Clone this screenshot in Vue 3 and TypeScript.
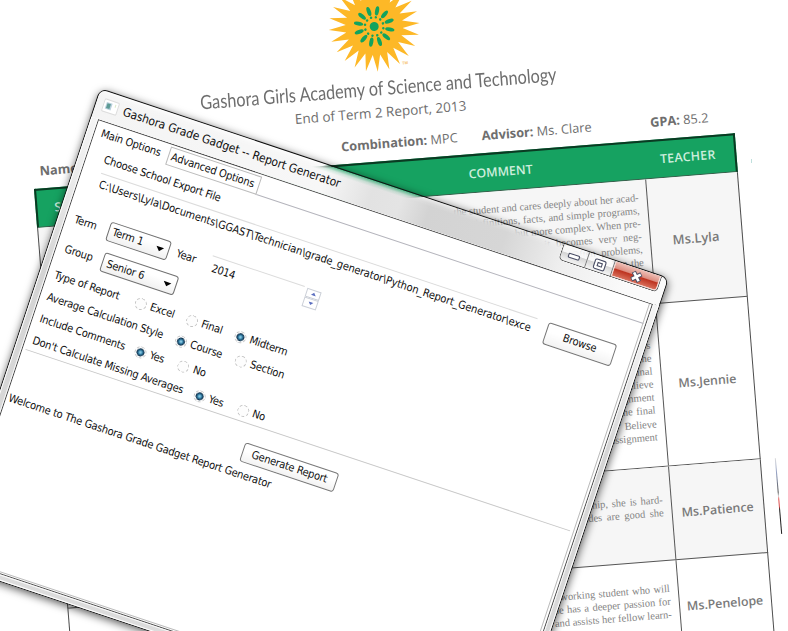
<script setup lang="ts">
interface Choice {
  label: string
  on?: boolean
  width: number
}
interface OptionRow {
  label: string
  width: number
  choices: Choice[]
}
interface ReportLine {
  text: string
  spread?: number
}
interface ReportRow {
  teacher: string
  size: string
  lines: ReportLine[]
}

const optionRows: OptionRow[] = [
  {
    label: 'Type of Report',
    width: 85,
    choices: [
      { label: 'Excel', width: 54 },
      { label: 'Final', width: 50.7 },
      { label: 'Midterm', on: true, width: 60 },
    ],
  },
  {
    label: 'Average Calculation Style',
    width: 134.8,
    choices: [
      { label: 'Course', on: true, width: 63.3 },
      { label: 'Section', width: 60 },
    ],
  },
  {
    label: 'Include Comments',
    width: 99.6,
    choices: [
      { label: 'Yes', on: true, width: 45.9 },
      { label: 'No', width: 40 },
    ],
  },
  {
    label: "Don't Calculate Missing Averages",
    width: 169.6,
    choices: [
      { label: 'Yes', on: true, width: 46 },
      { label: 'No', width: 40 },
    ],
  },
]

const reportRows: ReportRow[] = [
  {
    teacher: 'Ms.Lyla',
    size: 'r1',
    lines: [
      { text: 'the student and cares deeply about her acad-' },
      { text: 'definitions, facts, and simple programs,', spread: 0.4 },
      { text: 'but more complex. When pre-' },
      { text: 'it becomes very neg-', spread: 3.3 },
      { text: 'Often problems,', spread: 3 },
      { text: 'when the', spread: 1 },
      { text: 'is' },
    ],
  },
  {
    teacher: 'Ms.Jennie',
    size: 'r2',
    lines: [
      { text: 'ys' },
      { text: 'the' },
      { text: 'final' },
      { text: 'believe' },
      { text: 'assignment' },
      { text: 'the final', spread: 1 },
      { text: '’ Believe', spread: 1 },
      { text: 'assignment' },
    ],
  },
  {
    teacher: 'Ms.Patience',
    size: 'r3',
    lines: [
      { text: 'ship, she is hard-', spread: 1.3 },
      { text: 'grades are good she', spread: 2 },
    ],
  },
  {
    teacher: 'Ms.Penelope',
    size: 'r4',
    lines: [
      { text: 'working student who will', spread: 0.7 },
      { text: 'she has a deeper passion for', spread: 0.8 },
      { text: 'and assists her fellow learn-' },
    ],
  },
]

const sunPoints = Array.from({ length: 48 }, (_, i) => {
  const r = i % 2 === 0 ? 45.5 : 28.5
  const a = (i * Math.PI) / 24
  return `${(r * Math.cos(a)).toFixed(2)},${(r * Math.sin(a)).toFixed(2)}`
}).join(' ')
const petals = Array.from({ length: 12 }, (_, i) => i * 30 + 15)
</script>

<template>
  <div class="desk">
    <section class="page">
      <div class="crest">
        <svg width="100" height="94" viewBox="-50 -47 100 94">
          <polygon :points="sunPoints" fill="#fdb827" />
          <circle r="4.5" fill="#12a35e" />
          <g v-for="a in petals" :key="a" :transform="`rotate(${a})`" fill="#12a35e">
            <ellipse cx="15.9" cy="0" rx="4.7" ry="2" />
            <circle cx="9.3" cy="0" r="1.25" />
          </g>
          <text x="25" y="40" class="tm">TM</text>
        </svg>
      </div>
      <h1><span>Gashora Girls Academy of Science and Technology</span></h1>
      <h2>End of Term 2 Report, 2013</h2>
      <div class="facts">
        <span class="name"><b>Name</b></span>
        <span class="comb"><b>Combination:</b> MPC</span>
        <span class="adv"><b>Advisor:</b> Ms. Clare</span>
        <span><b>GPA:</b> 85.2</span>
      </div>
      <div class="table">
        <div class="thead">
          <span class="th-s">S</span>
          <span class="th-c">COMMENT</span>
          <span class="th-t">TEACHER</span>
        </div>
        <div v-for="row in reportRows" :key="row.teacher" class="trow" :class="row.size">
          <div class="cell"></div>
          <div class="cell comment">
            <p v-for="(line, i) in row.lines" :key="i" :style="{ wordSpacing: (line.spread ?? 0) + 'px' }">{{ line.text }}</p>
          </div>
          <div class="cell teacher">{{ row.teacher }}</div>
        </div>
      </div>
    </section>

    <i class="speck"></i>
    <i class="sliver"></i>

    <section class="window">
      <header class="titlebar">
        <svg class="app-icon" width="17" height="16" viewBox="0 0 17 16">
          <rect x=".5" y="1.500" width="15" height="12.500" rx="1" fill="#fff" stroke="#dcdcdc" />
          <rect x="3" y="4" width="6" height="7" fill="#b9d0dc" />
          <rect x="4" y="5" width="3.500" height="5" fill="#5d9a94" />
          <path d="M12.500 4v3" stroke="#dbe9c8" />
        </svg>
        <span class="title">Gashora Grade Gadget -- Report Generator</span>
        <div class="controls">
          <span class="ctl min">
            <svg width="14" height="10" viewBox="0 0 14 10"><rect x="1.500" y="3.200" width="11" height="4" rx="1" fill="#fff" stroke="#4b4f66" stroke-width="1.100" /></svg>
          </span>
          <span class="ctl max">
            <svg width="14" height="12" viewBox="0 0 14 12"><rect x="1.500" y="1" width="11" height="9.600" rx="1.500" fill="#fff" stroke="#4b4f66" stroke-width="1.100" /><rect x="4.800" y="4" width="4.400" height="3.400" fill="#fff" stroke="#4b4f66" stroke-width="1.100" /></svg>
          </span>
          <span class="ctl close">
            <svg width="15" height="13" viewBox="0 0 15 13"><path d="M3.500 2.500 11.500 10.500M11.500 2.500 3.500 10.500" stroke="#4b4f66" stroke-width="4.600" /><path d="M4 3 11 10M11 3 4 10" stroke="#fff" stroke-width="2.600" /></svg>
          </span>
        </div>
      </header>

      <div class="frame">
        <main class="client">
          <nav class="tabs">
            <span class="tab main">Main Options</span>
            <span class="tab adv-tab">Advanced Options</span>
            <span class="tab-rest"></span>
          </nav>
          <div class="pane">
            <div class="choose">Choose School Export File</div>
            <div class="file-row">
              <div class="entry"><span>C:\Users\Lyla\Documents\GGAST\Technician\grade_generator\Python_Report_Generator\exce</span></div>
              <button class="browse">Browse</button>
            </div>
            <div class="line term-line">
              <span class="lbl-term">Term</span>
              <span class="combo c-term">Term 1<svg width="9" height="6" viewBox="0 0 9 6"><path d="M.5.800h8L4.500 5.200z" fill="#000" /></svg></span>
              <span class="lbl-year">Year</span>
              <span class="year">2014</span>
              <span class="spin">
                <i><svg width="6" height="4" viewBox="0 0 6 4"><path d="M.5 3.500h5L3 .5z" fill="#5c6fc0" /></svg></i>
                <i><svg width="6" height="4" viewBox="0 0 6 4"><path d="M.5.500h5L3 3.500z" fill="#5c6fc0" /></svg></i>
              </span>
            </div>
            <div class="line group-line">
              <span class="lbl-group">Group</span>
              <span class="combo c-group">Senior 6<svg width="9" height="6" viewBox="0 0 9 6"><path d="M.5.800h8L4.500 5.200z" fill="#000" /></svg></span>
            </div>
            <div v-for="row in optionRows" :key="row.label" class="opt-row">
              <span :style="{ width: row.width + 'px' }">{{ row.label }}</span>
              <span v-for="c in row.choices" :key="c.label" class="choice" :style="{ width: c.width + 'px' }">
                <i class="radio" :class="{ on: c.on }"></i>{{ c.label }}
              </span>
            </div>
          </div>
          <div class="generate-row"><button class="generate">Generate Report</button></div>
          <div class="welcome">Welcome to The Gashora Grade Gadget Report Generator</div>
        </main>
      </div>
    </section>
  </div>
</template>

<style>
body {
  background: #fff;
  overflow: hidden;
}
</style>

<style scoped>
.desk {
  position: relative;
  width: 788px;
  height: 631px;
  overflow: hidden;
  background: #fff;
}
.desk * {
  box-sizing: border-box;
}

/* printed report */
.page {
  position: absolute;
  left: 34.3px;
  top: 7px;
  width: 703px;
  transform-origin: 0 182px;
  transform: rotate(-4.55deg);
  font-family: 'Open Sans', 'Liberation Sans', sans-serif;
  color: #6e6e6e;
  white-space: nowrap;
}
.crest {
  display: flex;
  justify-content: center;
  height: 94px;
}
.crest svg {
  display: block;
}
.tm {
  font: bold 4px 'Liberation Sans', sans-serif;
  fill: #f6c069;
}
h1 {
  display: flex;
  justify-content: center;
  margin: 2px 0 0;
  height: 26px;
  font: 400 19.500px/25px Lato, sans-serif;
}
h1 span {
  transform: scaleX(0.834);
}
h2 {
  margin: 0;
  height: 25px;
  text-align: center;
  font-size: 13.500px;
  font-weight: 400;
  line-height: 23px;
}
.facts {
  display: flex;
  height: 35px;
  padding: 7px 0 0 7px;
  font-size: 12.800px;
  line-height: 20px;
}
.facts b {
  font-weight: 700;
}
.name {
  width: 302.500px;
}
.comb {
  width: 141px;
}
.adv {
  width: 169px;
}
.table {
  width: 702.500px;
}
.thead {
  display: flex;
  height: 39px;
  background: #16a261;
  border: 2px solid #0a3a22;
  border-bottom: 1px solid #3e5e4e;
  color: #cdeedd;
  font-size: 12.400px;
  font-weight: 600;
  line-height: 36px;
}
.th-s {
  width: 88px;
  padding-left: 17px;
}
.th-c {
  width: 520px;
  padding-left: 344.500px;
}
.th-t {
  flex: 1;
  text-align: center;
  padding-right: 2px;
  letter-spacing: 0.200px;
}
.trow {
  display: grid;
  grid-template-columns: 90px 518.500px 1fr;
  border: 1.500px solid #4c4c4c;
  border-top: 0;
  border-bottom: 1.600px solid #555;
}
.cell + .cell {
  border-left: 1.600px solid #555;
}
.comment {
  padding-right: 7.500px;
  font: 10.500px/13.100px 'Liberation Serif', serif;
  color: #858585;
  text-align: right;
}
.comment p {
  margin: 0;
}
.teacher {
  display: flex;
  align-items: center;
  justify-content: center;
  font-size: 12.400px;
  font-weight: 600;
  color: #7a7a7a;
}
.r1 {
  height: 124.500px;
  background: #f6f6f6;
}
.r1 .comment {
  padding-top: 10.500px;
}
.r1 .teacher {
  font-size: 12.900px;
}
.r2 {
  height: 163px;
}
.r2 .comment {
  padding-top: 34.500px;
}
.r3 {
  height: 94px;
  background: #f6f6f6;
}
.r3 .comment {
  padding-top: 26.500px;
}
.r4 {
  height: 94px;
}
.r4 .comment {
  padding-top: 21px;
}
.speck {
  position: absolute;
  left: 751px;
  top: 159px;
  width: 1px;
  height: 4px;
  background: #bfe0dd;
}
.sliver {
  position: absolute;
  left: 777.500px;
  top: 458px;
  width: 1.300px;
  height: 76px;
  transform: rotate(-4.800deg);
  background: linear-gradient(#ddd 0, #8e9cc0 20%, #555 45%, #dcdcdc 50%, #e8504e 54%, #d64a4a 64%, #222 68%, #222 100%);
}

/* application window */
.window {
  position: absolute;
  left: 100.200px;
  top: 88px;
  width: 600px;
  height: 500px;
  display: flex;
  flex-direction: column;
  transform-origin: 0 0;
  transform: rotate(18.435deg);
  border: 1.500px solid #111;
  border-radius: 8px 8px 6px 6px;
  box-shadow: 1px 2px 9px rgba(0, 0, 0, 0.65);
  font-family: 'DejaVu Sans Condensed', 'DejaVu Sans', sans-serif;
  font-stretch: condensed;
  font-size: 11px;
  letter-spacing: -0.200px;
  color: #101010;
  white-space: nowrap;
}
.titlebar {
  position: relative;
  display: flex;
  height: 29px;
  padding-left: 7px;
}
.titlebar::before {
  content: '';
  position: absolute;
  inset: 0;
  border-radius: 6px 6px 0 0;
  background: linear-gradient(to right, #f4f4f4 0, #f7f7f7 240px, #e2e2e2 290px, #e4e4e4 320px, #d3d3d3 350px, #d6d6d6 430px, #eee 490px, #fafafa 560px);
  mask-image: linear-gradient(to bottom, rgba(0, 0, 0, 0.3) 0, rgba(0, 0, 0, 0.85) 4px, #000 7px);
}
.app-icon {
  position: relative;
  margin-top: 6px;
}
.title {
  position: relative;
  margin: 5px 0 0 4.500px;
  font-size: 12px;
  line-height: 18px;
  letter-spacing: -0.110px;
}
.controls {
  position: relative;
  display: flex;
  width: 104px;
  height: 17px;
  margin: 0 6px 0 auto;
  border: 1.200px solid #555;
  border-top: 0;
  border-radius: 0 0 5px 5px;
  overflow: hidden;
}
.ctl {
  display: flex;
  align-items: center;
  justify-content: center;
  width: 27px;
  border-right: 1px solid #777;
  background: linear-gradient(rgba(255, 255, 255, 0.5) 45%, rgba(190, 190, 190, 0.55) 50%, rgba(245, 245, 245, 0.8));
}
.ctl svg {
  margin-top: 2px;
}
.ctl.close {
  flex: 1;
  border: 1px solid #f6d5d0;
  border-top: 0;
  border-radius: 0 0 4px 0;
  background: linear-gradient(#efc3bb 0, #dd8d80 45%, #bd3320 52%, #d9705c 100%);
}
.frame {
  flex: 1;
  padding: 0 6.500px 6.500px;
  background: linear-gradient(#f4f4f4 0, #ececec 60px, #d4d4d4 160px, #dcdcdc 100%);
  box-shadow: inset 1px 0 #fff, inset -1px -1px #fff;
  border-radius: 0 0 5px 5px;
}
.client {
  height: 100%;
  background: #fff;
  border: 1.200px solid #444;
  outline: 1px solid #fafafa;
  box-shadow: inset -2px -1px #fff, inset -3px -2px #bbb;
  padding: 2px 2px 0 1px;
}
.tabs {
  display: flex;
  height: 19px;
  line-height: 19px;
}
.tab.main {
  width: 76px;
  padding-left: 6px;
}
.adv-tab {
  width: 96px;
  padding-left: 3px;
  border: 1px solid #bbb;
  line-height: 17px;
}
.tab-rest {
  flex: 1;
  border-bottom: 1px solid #b4b4bc;
}
.pane {
  height: 220px;
  margin: 0 4px 0 2px;
  padding-left: 4.500px;
  border-bottom: 1px solid #c8c8c8;
}
.choose {
  height: 28px;
  padding: 6.500px 0 0 10.500px;
  line-height: 15px;
}
.file-row {
  display: flex;
  margin-left: 11.500px;
  height: 24px;
}
.entry {
  width: 460px;
  height: 21px;
  padding: 0 3px 0 2px;
  border-top: 1px solid #dcdcdc;
  line-height: 22px;
  letter-spacing: -0.050px;
}
.entry span {
  display: block;
  overflow: hidden;
}
button {
  padding: 0;
  font: inherit;
  letter-spacing: inherit;
  color: inherit;
  border: 1px solid #777;
  border-radius: 3px;
  background: linear-gradient(#fff 40%, #f3f3f3);
}
.browse {
  width: 72.500px;
  height: 22.500px;
  margin: 0 0 0 12px;
  line-height: 20px;
}
.line {
  display: flex;
  line-height: 19px;
}
.term-line {
  height: 20px;
  margin: 19px 0 0 1.500px;
}
.lbl-term {
  width: 35px;
}
.combo {
  display: flex;
  align-items: center;
  justify-content: space-between;
  height: 20px;
  padding: 0 4px;
  border: 1px solid #707070;
  border-radius: 3px;
  background: linear-gradient(#fff 30%, #f1f1f1);
}
.combo svg {
  margin-top: 2px;
}
.c-term {
  width: 64.500px;
  line-height: 18px;
}
.lbl-year {
  width: 43px;
  padding-left: 8px;
}
.year {
  width: 97px;
  padding-left: 3px;
  border-top: 1px solid #dcdcdc;
  line-height: 23px;
}
.spin {
  display: flex;
  flex-direction: column;
  margin-left: 3px;
  margin-top: 0.500px;
}
.spin i {
  display: flex;
  align-items: center;
  justify-content: center;
  width: 15px;
  height: 9.500px;
  border: 1px solid #ccd0d8;
  background: #fff;
}
.group-line {
  height: 20px;
  margin: 11px 0 6px;
}
.lbl-group {
  width: 41px;
  padding-left: 1.500px;
}
.c-group {
  width: 78px;
}
.opt-row {
  display: flex;
  height: 23px;
  line-height: 23px;
}
.choice {
  display: flex;
  align-items: center;
  gap: 4px;
}
.radio {
  width: 12px;
  height: 12px;
  border: 1px dashed #c4c4c4;
  border-radius: 50%;
  background: #fdfdfd;
}
.radio.on {
  background: radial-gradient(circle at 5px 5px, #bfe6f5 0, #4fa0c4 1.500px, #1c5478 2.800px, #12324c 3.600px, #fdfdfd 4.300px);
}
.generate-row {
  height: 40px;
  padding: 17.500px 0 0 240.500px;
}
.generate {
  width: 99px;
  height: 20.500px;
  display: block;
  line-height: 18px;
}
.welcome {
  padding-left: 2px;
  line-height: 22px;
}
</style>
